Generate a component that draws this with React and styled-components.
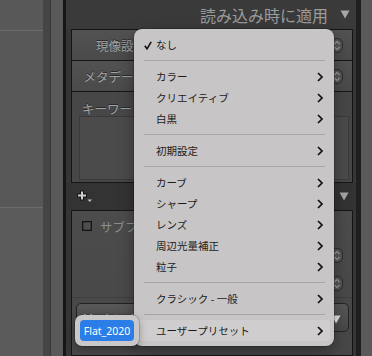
import React from 'react';
import styled, { createGlobalStyle } from 'styled-components';

const Global = createGlobalStyle`
  html, body { margin: 0; padding: 0; background: #373737; }
  body { font-family: "Noto Sans CJK JP", "Noto Sans", sans-serif; }
  #root { width: 372px; height: 356px; }
`;

const Screen = styled.div`
  position: relative;
  width: 372px;
  height: 356px;
  overflow: hidden;
  display: flex;
`;

const LeftPane = styled.div`
  width: 43px;
  flex: none;
  display: flex;
  flex-direction: column;
`;

const LeftBlock = styled.div`
  flex: ${p => (p.$h ? `0 0 ${p.$h}px` : '1')};
  background: ${p => p.$bg};
  border-bottom: ${p => (p.$line ? '1px solid #6c6c6c' : 'none')};
`;

const Strip = styled.div`
  flex: 0 0 ${p => p.$w}px;
  background: ${p => p.$bg};
`;

const Panel = styled.div`
  flex: 0 0 290px;
  display: flex;
  flex-direction: column;
  background: #363636;
`;

const Header = styled.div`
  flex: 0 0 29px;
  display: flex;
  align-items: center;
  justify-content: flex-end;
  gap: 12px;
  padding-right: 6px;
  background: #3a3a3a;
  color: #9b9b9b;
  font-size: 16px;
  line-height: 1;
`;

const Box = styled.div`
  margin: 0 3px 0 5px;
  border: 1px solid #151515;
  display: flex;
  flex-direction: column;
  background: ${p => p.$bg || '#4a4a4a'};
  flex: ${p => (p.$grow ? '1' : 'none')};
`;

const Row = styled.div`
  height: 30px;
  display: flex;
  align-items: center;
  border-bottom: 1px solid #161616;
  background: linear-gradient(#525252, #4a4a4a);
  padding-right: 9px;
`;

const Label = styled.div`
  width: 74px;
  text-align: right;
  font-size: 12.5px;
  color: #a2a2a2;
  text-shadow: 0 -1px 0 #2a2a2a;
  white-space: nowrap;
`;

const Spacer = styled.div`
  flex: 1;
`;

const KeywordRow = styled.div`
  display: flex;
  flex-direction: column;
  height: 90px;
  padding: 0 3px 2px 7px;
  box-sizing: border-box;
  background: #474747;
`;

const KeywordLabel = styled.div`
  font-size: 12.5px;
  color: #a2a2a2;
  padding: 7px 0 0 3px;
  height: 17px;
  text-shadow: 0 -1px 0 #2a2a2a;
`;

const TextArea = styled.div`
  flex: 1;
  border: 1px solid #3a3a3a;
  background: #4b4b4b;
`;

const Between = styled.div`
  flex: 0 0 27px;
  display: flex;
  align-items: center;
  justify-content: space-between;
  padding: 0 7px 0 11px;
  background: #333333;
`;

const CheckRow = styled.div`
  height: 30px;
  display: flex;
  align-items: center;
  gap: 8px;
  padding: 0 10px;
  font-size: 12.5px;
  color: #8d8d8d;
  white-space: nowrap;
  overflow: hidden;
`;

const Checkbox = styled.div`
  width: 8px;
  height: 8px;
  border: 1px solid #141414;
  box-shadow: inset 0 0 0 0.5px #2a2a2a;
  background: #4e4e4e;
  flex: none;
`;

const PlainRow = styled.div`
  height: 28px;
  display: flex;
  align-items: center;
  justify-content: flex-end;
  padding-right: 9px;
  border-bottom: ${p => (p.$line ? '1px solid #3e3e3e' : 'none')};
`;

const DropButton = styled.div`
  margin: 5px 3px 0 4px;
  height: 29px;
  border: 1px solid #232323;
  border-radius: 5px;
  background: linear-gradient(#585858, #474747);
  display: flex;
  align-items: flex-start;
  justify-content: space-between;
  padding: 8px 7px 0 6px;
  box-sizing: border-box;
  font-family: "Liberation Sans", Arial, sans-serif;
  font-size: 12px;
  color: #c4c4c4;
`;

const DropText = styled.span`
  line-height: 14px;
`;

const DropArrow = styled.span`
  margin-top: 1px;
`;

const Menu = styled.div`
  position: absolute;
  left: 134px;
  top: 29px;
  width: 200px;
  height: 317px;
  box-sizing: border-box;
  padding: 5px 0;
  background: #c8c5c6;
  border-radius: 8px;
  box-shadow: 0 0 0 0.5px rgba(0, 0, 0, 0.35), 0 6px 16px rgba(0, 0, 0, 0.35);
  display: flex;
  flex-direction: column;
`;

const Item = styled.div`
  position: relative;
  flex: 0 0 21px;
  margin: 0 4px;
  padding: 0 7px 0 18px;
  border-radius: 4px;
  display: flex;
  align-items: center;
  justify-content: space-between;
  font-size: 10.5px;
  color: #1b1b1b;
  background: ${p => (p.$hover ? '#d0cdce' : 'transparent')};
`;

const Check = styled.svg`
  position: absolute;
  left: 6px;
  top: 7px;
`;

const Sep = styled.div`
  flex: 0 0 1px;
  margin: 5px 9px 5px 10px;
  background: #a8a5a6;
`;

const Submenu = styled.div`
  position: absolute;
  left: 75px;
  top: 315px;
  width: 64px;
  height: 31px;
  box-sizing: border-box;
  padding: 5px;
  background: #cac7c8;
  border-radius: 7px;
  box-shadow: 0 0 0 0.5px rgba(0, 0, 0, 0.3), 0 3px 8px rgba(0, 0, 0, 0.3);
  display: flex;
`;

const Selected = styled.div`
  flex: 0 0 54px;
  height: 21px;
  border-radius: 4px;
  background: #2b7de8;
  color: #ffffff;
  font-family: "Noto Sans", sans-serif;
  font-size: 10.5px;
  display: flex;
  align-items: center;
  justify-content: center;
`;

const Chevron = () => (
  <svg width="6" height="10" viewBox="0 0 6 10">
    <path d="M1 1 L5 5 L1 9" fill="none" stroke="#111" strokeWidth="1.7" />
  </svg>
);

const Triangle = ({ color = '#a6a6a6' }) => (
  <svg width="10" height="9" viewBox="0 0 10 9">
    <path d="M0.5 0.5 H9.5 L5 8.5 Z" fill={color} />
  </svg>
);

const Stepper = () => (
  <svg width="12" height="19" viewBox="0 0 12 19">
    <rect x="0.5" y="2.5" width="11" height="14" rx="5.5" fill="#575757" stroke="#2a2a2a" />
    <path d="M3.5 8 L6 5.5 L8.5 8 M3.5 11 L6 13.5 L8.5 11" fill="none" stroke="#9a9a9a" strokeWidth="1.2" />
  </svg>
);

const PlusIcon = () => (
  <svg width="16" height="13" viewBox="0 0 16 13">
    <path d="M5 0.5 V10.5 M0 5.5 H10" stroke="#161616" strokeWidth="4" />
    <path d="M5 1.5 V9.5 M1 5.5 H9" stroke="#cfcfcf" strokeWidth="2" />
    <path d="M10.5 9.5 H15 L12.75 12 Z" fill="#bdbdbd" />
  </svg>
);

const items = [
  { t: 'なし', check: true, sub: false },
  'sep',
  { t: 'カラー', sub: true },
  { t: 'クリエイティブ', sub: true },
  { t: '白黒', sub: true },
  'sep',
  { t: '初期設定', sub: true },
  'sep',
  { t: 'カーブ', sub: true },
  { t: 'シャープ', sub: true },
  { t: 'レンズ', sub: true },
  { t: '周辺光量補正', sub: true },
  { t: '粒子', sub: true },
  'sep',
  { t: 'クラシック - 一般', sub: true },
  'sep',
  { t: 'ユーザープリセット', sub: true, hover: true },
];

export default function App() {
  return (
    <>
      <Global />
      <Screen>
        <LeftPane>
          <LeftBlock $h={30} $bg="#585858" $line />
          <LeftBlock $h={176} $bg="#575757" $line />
          <LeftBlock $bg="#5b5b5b" />
        </LeftPane>
        <Strip $w={7} $bg="#454545" />
        <Strip $w={1} $bg="#383838" />
        <Strip $w={12} $bg="#595959" />
        <Strip $w={3} $bg="#161616" />
        <Panel>
          <Header>
            <span>読み込み時に適用</span>
            <Triangle />
          </Header>
          <Box>
            <Row>
              <Label>現像設定</Label>
              <Spacer />
              <Stepper />
            </Row>
            <Row>
              <Label>メタデータ</Label>
              <Spacer />
              <Stepper />
            </Row>
            <KeywordRow>
              <KeywordLabel>キーワード</KeywordLabel>
              <TextArea />
            </KeywordRow>
          </Box>
          <Between>
            <PlusIcon />
            <Triangle />
          </Between>
          <Box $grow $bg="linear-gradient(#4c4c4c, #474747)">
            <CheckRow>
              <Checkbox />
              <span>サブフォルダーに読み込み</span>
            </CheckRow>
            <PlainRow>
              <Stepper />
            </PlainRow>
            <PlainRow $line>
              <Stepper />
            </PlainRow>
            <DropButton>
              <DropText>Macintosh HD</DropText>
              <DropArrow>
                <Triangle color="#e6e6e6" />
              </DropArrow>
            </DropButton>
          </Box>
        </Panel>
        <Strip $w={5} $bg="#1f1f1f" />
        <Strip $w={11} $bg="#5a5a5a" />

        <Menu>
          {items.map((it, i) =>
            it === 'sep' ? (
              <Sep key={i} />
            ) : (
              <Item key={i} $hover={it.hover}>
                {it.check && (
                  <Check width="8" height="9" viewBox="0 0 8 9">
                    <path d="M0.8 4.8 L3 7.8 L7.2 0.8" fill="none" stroke="#111" strokeWidth="1.6" />
                  </Check>
                )}
                <span>{it.t}</span>
                {it.sub && <Chevron />}
              </Item>
            )
          )}
        </Menu>
        <Submenu>
          <Selected>Flat_2020</Selected>
        </Submenu>
      </Screen>
    </>
  );
}
